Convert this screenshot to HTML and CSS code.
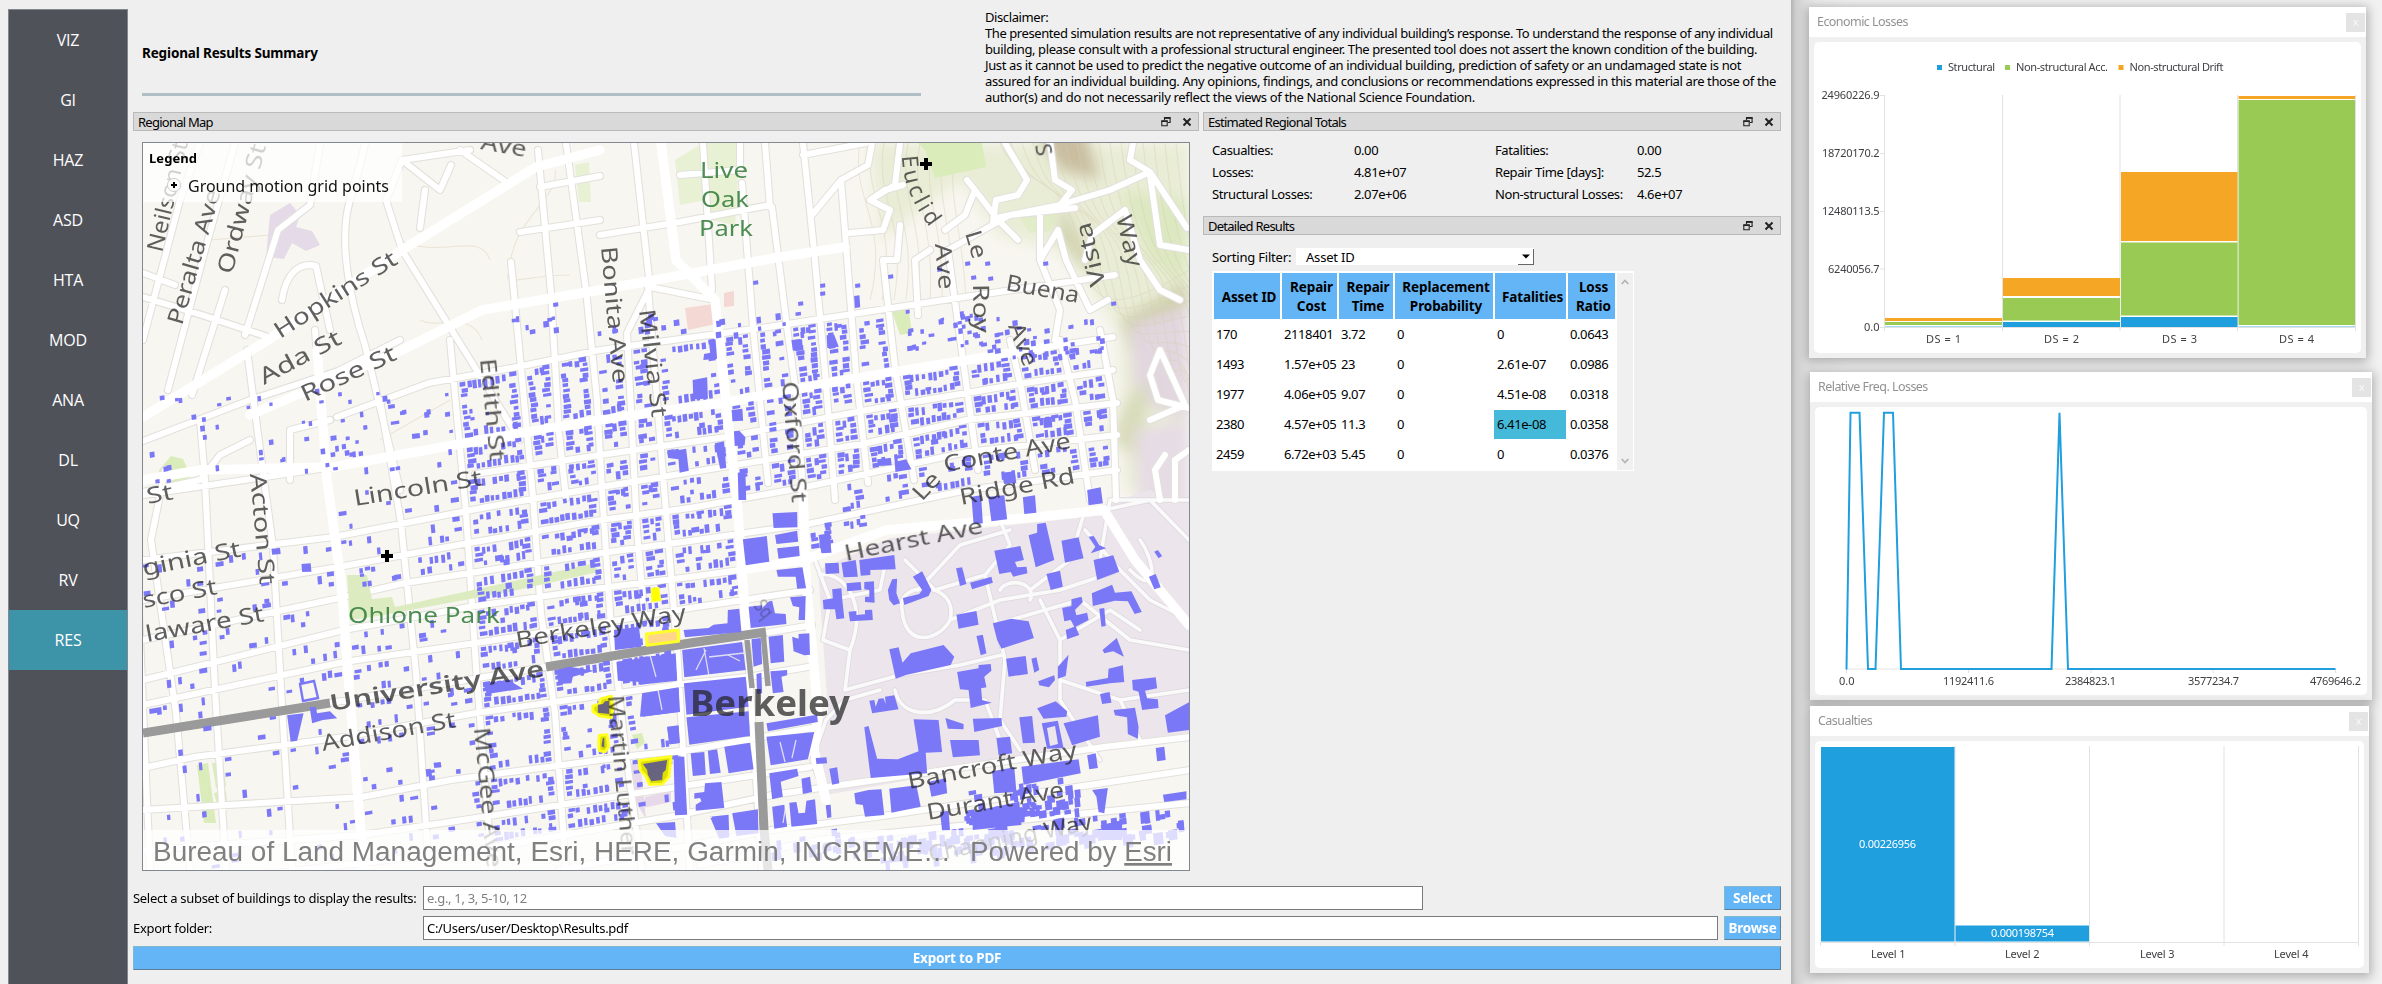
FILE: index.html
```html
<!DOCTYPE html>
<html lang="en">
<head>
<meta charset="utf-8">
<title>Regional Results Summary</title>
<link rel="stylesheet" href="styles.css">
</head>
<body>
<svg class="defs" width="0" height="0">
  <symbol id="float" viewBox="0 0 10 10"><path d="M3.5 3V.9h5.6v4.6H7M.8 4.2h5.4v4.6H.8z" fill="none" stroke="#222" stroke-width="1.1"/><path d="M3 .8h6.5M.3 4.2h6.4" stroke="#222" stroke-width="1.7"/></symbol>
  <symbol id="close" viewBox="0 0 10 10"><path d="M1.5 1.5l7 7M8.5 1.5l-7 7" stroke="#222" stroke-width="2"/></symbol>
</svg>
<div class="app">
  <nav class="side">
    <a>VIZ</a><a>GI</a><a>HAZ</a><a>ASD</a><a>HTA</a><a>MOD</a><a>ANA</a><a>DL</a><a>UQ</a><a>RV</a><a class="active">RES</a>
  </nav>
  <main class="main">
    <header class="head">
      <div class="headline"><h1>Regional Results Summary</h1></div>
      <div class="disclaimer">
        <div>Disclaimer:</div>
        <div class="l1">The presented simulation results are not representative of any individual building’s response. To understand the response of any individual</div>
        <div class="l2">building, please consult with a professional structural engineer. The presented tool does not assert the known condition of the building.</div>
        <div class="l3">Just as it cannot be used to predict the negative outcome of an individual building, prediction of safety or an undamaged state is not</div>
        <div class="l4">assured for an individual building. Any opinions, findings, and conclusions or recommendations expressed in this material are those of the</div>
        <div class="l5">author(s) and do not necessarily reflect the views of the National Science Foundation.</div>
      </div>
    </header>
    <div class="docks">
      <section class="dock-map">
        <div class="dock-title"><span>Regional Map</span><svg><use href="#float"/></svg><svg><use href="#close"/></svg></div>
        <div class="map"><svg id="map" viewBox="143 143 1046 727" width="1046" height="727"></svg></div>
      </section>
      <section class="dock-results">
        <div class="dock-title"><span>Estimated Regional Totals</span><svg><use href="#float"/></svg><svg><use href="#close"/></svg></div>
        <div class="totals">
          <span>Casualties:</span><span>0.00</span><span>Fatalities:</span><span>0.00</span>
          <span>Losses:</span><span>4.81e+07</span><span>Repair Time [days]:</span><span>52.5</span>
          <span>Structural Losses:</span><span>2.07e+06</span><span>Non-structural Losses:</span><span>4.6e+07</span>
        </div>
        <div class="dock-title"><span>Detailed Results</span><svg><use href="#float"/></svg><svg><use href="#close"/></svg></div>
        <div class="filter"><label>Sorting Filter:</label><div class="select"><span>Asset ID</span><i><svg width="8" height="5"><path d="M0 .5h8L4 4.5z"/></svg></i></div></div>
        <div class="table">
          <div class="grid">
            <b>Asset ID</b><b>Repair<br>Cost</b><b>Repair<br>Time</b><b>Replacement<br>Probability</b><b>Fatalities</b><b>Loss<br>Ratio</b>
            <span>170</span><span>2118401</span><span>3.72</span><span>0</span><span>0</span><span>0.0643</span>
            <span>1493</span><span>1.57e+05</span><span>23</span><span>0</span><span>2.61e-07</span><span>0.0986</span>
            <span>1977</span><span>4.06e+05</span><span>9.07</span><span>0</span><span>4.51e-08</span><span>0.0318</span>
            <span>2380</span><span>4.57e+05</span><span>11.3</span><span>0</span><span class="sel">6.41e-08</span><span>0.0358</span>
            <span>2459</span><span>6.72e+03</span><span>5.45</span><span>0</span><span>0</span><span>0.0376</span>
          </div>
          <div class="scroll"><svg width="8" height="6"><path d="M.7 5L4 1.5 7.3 5"/></svg><svg width="8" height="6"><path d="M.7 1L4 4.5 7.3 1"/></svg></div>
        </div>
      </section>
    </div>
    <div class="form">
      <label>Select a subset of buildings to display the results:</label><div class="input short hint">e.g., 1, 3, 5-10, 12</div><button>Select</button>
    </div>
    <div class="form">
      <label>Export folder:</label><div class="input">C:/Users/user/Desktop\Results.pdf</div><button>Browse</button>
    </div>
    <button class="export">Export to PDF</button>
  </main>
  <aside class="charts">
    <section class="win w1">
      <div class="win-title"><span>Economic Losses</span><i>x</i></div>
      <div class="card">
        <svg viewBox="1814 42 547 311" width="547" height="311">
          <g class="rule"><path d="M1884.5 95V331M2002.5 95V331M2120 95V331M2237.5 95V331M2355.5 95V331M1880 327.5H2355M1880 95.5h5M1880 153.5h5M1880 211.5h5M1880 269h5"/></g>
          <g fill="#f6a625"><path d="M1885 318h117v3h-117zM2003 278h117v18h-117zM2121 172h116.500v69H2121zM2238.500 96H2355v3h-116.500z"/></g>
          <g fill="#99ca53"><path d="M1885 322h117v3h-117zM2003 298h117v22.500h-117zM2121 242.500h116.500v73H2121zM2238.500 100H2355v225h-116.500z"/></g>
          <g fill="#209fdf"><path d="M2003 322h117v5h-117zM2121 317h116.500v10H2121z"/><path opacity=".4" d="M1885 326h117v1h-117zM2238.500 326H2355v1h-116.500z"/></g>
          <path fill="#209fdf" d="M1937 65h5v5h-5z"/><path fill="#99ca53" d="M2005 65h5v5h-5z"/><path fill="#f6a625" d="M2118.500 65h5v5h-5z"/>
          <text x="1948" y="71" textLength="47">Structural</text><text x="2016" y="71" textLength="92">Non-structural Acc.</text><text x="2129.500" y="71" textLength="94">Non-structural Drift</text>
          <g class="num"><text x="1821.500" y="99" textLength="58">24960226.9</text><text x="1822" y="157" textLength="57.500">18720170.2</text><text x="1822" y="215" textLength="57.500">12480113.5</text><text x="1828" y="273" textLength="51.500">6240056.7</text><text x="1864" y="331" textLength="15.500">0.0</text></g>
          <g><text x="1926" y="343" textLength="35">DS = 1</text><text x="2044" y="343" textLength="35">DS = 2</text><text x="2162" y="343" textLength="35">DS = 3</text><text x="2279" y="343" textLength="35">DS = 4</text></g>
        </svg>
      </div>
    </section>
    <section class="win w2">
      <div class="win-title"><span>Relative Freq. Losses</span><i>x</i></div>
      <div class="card">
        <svg viewBox="1815 407 552 288" width="552" height="288">
          <path class="rule" d="M1846.500 669V673M1968.500 669V673M2091 669V673M2213 669V673M2335.500 669V673M1846 669H2335"/>
          <path fill="none" stroke="#209fdf" stroke-width="2" d="M1846.500 669.500L1850.500 412.700H1859.500L1868 669H1875.500L1884 412.700H1893L1901 669H2051.500L2059.500 412.700 2068 669H2335.500"/>
          <text x="1839" y="685" textLength="15.500">0.0</text><text x="1943" y="685" textLength="51">1192411.6</text><text x="2065" y="685" textLength="51">2384823.1</text><text x="2188" y="685" textLength="51">3577234.7</text><text x="2310" y="685" textLength="51">4769646.2</text>
        </svg>
      </div>
    </section>
    <section class="win w3">
      <div class="win-title"><span>Casualties</span><i>x</i></div>
      <div class="card">
        <svg viewBox="1815 741 549 227" width="549" height="227">
          <path class="rule" d="M1820.500 942V946M1955 746V946M2089.500 746V946M2224 746V946M2358.500 746V946M1820 942.500H2358"/>
          <path fill="#209fdf" d="M1821 747h133.500v194.500H1821zM1955.500 925.500H2089v16h-133.500z"/>
          <g class="light"><text x="1859" y="848" textLength="57">0.00226956</text><text x="1991" y="937" textLength="63">0.000198754</text></g>
          <text x="1871" y="958" textLength="34.500">Level 1</text><text x="2005" y="958" textLength="34.500">Level 2</text><text x="2140" y="958" textLength="34.500">Level 3</text><text x="2274" y="958" textLength="34.500">Level 4</text>
        </svg>
      </div>
    </section>
  </aside>
</div>
<script src="map.js"></script>
</body>
</html>
```
FILE: styles.css
```css
* { box-sizing: border-box; }
body { margin: 0; width: 2382px; height: 984px; overflow: hidden; background: #efefef; color: #000; font: 13px/16px "Noto Sans", sans-serif; letter-spacing: -0.4px; }
.defs { position: absolute; }
.app { display: flex; height: 984px; }
.side { width: 120px; height: 980px; margin: 9px 0 0 8px; background: #50525a; border: 1px solid #828790; flex: none; }
.side a { display: flex; height: 60px; align-items: center; justify-content: center; color: #fff; font: 16px/20px "Open Sans", sans-serif; letter-spacing: -0.2px; }
.side .active { background: #3d93a8; }
.main { width: 1663px; flex: none; padding: 0 10px 0 5px; display: flex; flex-direction: column; }
.head { display: flex; height: 112px; flex: none; }
.headline { width: 779px; margin: 0 64px 0 9px; height: 96px; border-bottom: 3px solid #b0bec5; padding-top: 45px; }
h1 { margin: 0; font-size: 13.5px; line-height: 16px; letter-spacing: -0.15px; }
.disclaimer { padding-top: 9px; white-space: nowrap; }
.l1 { letter-spacing: -0.42px; }
.l2 { letter-spacing: -0.39px; }
.l3 { letter-spacing: -0.37px; }
.l4 { letter-spacing: -0.38px; }
.l5 { letter-spacing: -0.33px; }
.docks { display: flex; gap: 4px; height: 774px; flex: none; }
.dock-map { width: 1066px; }
.dock-results { width: 578px; }
.dock-title { display: flex; align-items: center; gap: 11px; height: 19px; background: #d9d9d9; border: 1px solid #bababa; padding: 0 6px 0 4px; letter-spacing: -0.75px; }
.dock-title span { flex: 1; }
.dock-title svg { width: 10px; height: 10px; }
.map { width: 1048px; height: 729px; margin: 11px 0 0 9px; border: 1px solid #828790; overflow: hidden; }
.map svg { display: block; }
.totals { display: grid; grid-template-columns: 142px 141px 142px 1fr; grid-auto-rows: 22px; height: 85px; padding: 8px 0 0 9px; line-height: 22px; }
.filter { display: flex; align-items: center; padding: 0 0 0 9px; height: 17px; margin-top: 13px; letter-spacing: -0.2px; }
.filter label { width: 84px; }
.select { width: 238px; height: 17px; background: #fff; display: flex; justify-content: space-between; align-items: center; padding-left: 10px; }
.select i { width: 16px; height: 16px; display: flex; align-items: center; justify-content: center; border: solid #666; border-width: 0 1px 1px 0; }
.table { display: flex; justify-content: space-between; width: 422px; height: 200px; margin: 6px 0 0 9px; padding: 2px 1px 1px 2px; background: #fff; }
.grid { display: grid; grid-template-columns: 66px 55px 54px 98px 71px 47px; grid-template-rows: 46px; grid-auto-rows: 30px; column-gap: 2px; }
.grid b { background: #64b5f6; display: flex; align-items: center; justify-content: center; text-align: center; font-size: 13.5px; line-height: 19px; padding: 2px 0 0 4px; letter-spacing: -0.1px; }
.grid span { padding-left: 2px; line-height: 31px; }
.grid .sel { background: #45b9d9; margin: 1px 0 0 -1px; padding-left: 3px; line-height: 29px; }
.scroll { width: 16px; background: #f0f0f0; display: flex; flex-direction: column; justify-content: space-between; align-items: center; padding: 6px 0; }
.scroll path { fill: none; stroke: #b4b4b4; stroke-width: 1.8; }
.form { display: flex; height: 24px; margin-bottom: 6px; flex: none; align-items: center; letter-spacing: -0.31px; }
.form label { width: 290px; }
.input { width: 1295px; height: 24px; border: 1px solid #7a7a7a; background: #fff; padding: 3px; margin-right: 6px; }
.short { width: 1000px; margin-right: 301px; }
.hint { color: #808080; }
button { width: 57px; height: 24px; padding: 0; background: #64b5f6; border: 1px solid #7fb8cf; border-right-color: #5c7f99; border-bottom-color: #5c7f99; border-radius: 1px; color: #fff; font: bold 13.5px/16px "Noto Sans", sans-serif; letter-spacing: -0.2px; }
.export { width: 1648px; flex: none; }
.charts { flex: 1; background: linear-gradient(90deg, #b4b4b4, #cfcfcf 5px, #e2e2e2 16px, #ececec 26px, #f1f1f1 60px); padding: 7px 0 0 18px; }
.win { background: #f0f0f0; box-shadow: 0 2px 10px 2px rgba(0,0,0,.28); }
.w1 { width: 557px; height: 351px; margin-bottom: 14px; }
.w2 { width: 562px; height: 328px; margin: 0 0 6px 1px; }
.w3 { width: 559px; height: 267px; margin-left: 1px; }
.win-title { height: 30px; background: #fff; display: flex; justify-content: space-between; align-items: center; padding: 0 1px 0 8px; color: #929292; font-size: 12.5px; letter-spacing: -0.55px; }
.win-title i { width: 19px; height: 19px; background: #e4e4e4; color: #f8f8f8; font-style: normal; line-height: 17px; text-align: center; font-size: 11px; }
.card { margin: 5px 5px 0; background: #fff; border-radius: 5px; overflow: hidden; }
.card svg { display: block; }
.card text { font-size: 11px; letter-spacing: 0; fill: #404044; }
.card .light text { fill: #fff; }
.rule { fill: none; stroke: #e2e2e2; stroke-width: 1; }
#map text { font-family: "Noto Sans", sans-serif; font-size: 22.5px; letter-spacing: 0; fill: #222; opacity: .72; }
#map .park { fill: #2f7a35; opacity: .85; }
#map .strong { font-weight: 600; }
#map .city { font-weight: 700; font-size: 36px; }
#map .faint { opacity: .35; font-size: 19px; }
#map .legend { font: bold 13px "Noto Sans", sans-serif; fill: #000; opacity: 1; }
#map .item { font: 16px "Noto Sans", sans-serif; fill: #111; opacity: 1; }
#map .credit { font: 27px "Liberation Sans", Arial, sans-serif; fill: #808080; opacity: 1; }
```
FILE: map.js
```js
(function () {
  var svg = document.getElementById('map');
  var out = [];
  var seed = 11;
  function rnd() { seed = (seed * 16807) % 2147483647; return seed / 2147483647; }

  // Streets running north-south: [x, y] vertices, top to bottom.
  var ns = {
    w0: [[128, 400], [135, 520], [150, 870]],
    w1: [[165, 470], [151, 540], [176, 713], [190, 870]],
    w2: [[200, 420], [205, 480], [215, 690], [226, 870]],
    w3: [[247, 350], [264, 480], [273, 547], [284, 740], [292, 870]],
    sac: [[315, 330], [327, 480], [341, 580], [351, 713], [364, 870]],
    w5: [[380, 400], [401, 523], [416, 673], [429, 870]],
    cal: [[450, 340], [466, 513], [476, 667], [492, 870]],
    mcg: [[511, 262], [524, 400], [533, 497], [541, 613], [555, 713], [566, 870]],
    edi: [[538, 150], [551, 293], [559, 433], [566, 498]],
    gra: [[566, 143], [586, 290], [597, 400], [602, 490], [610, 613], [625, 747], [642, 870]],
    bon: [[634, 143], [650, 287], [627, 333], [631, 410], [637, 530], [644, 613]],
    mil: [[648, 287], [657, 400], [665, 500], [677, 647], [690, 870]],
    sha: [[661, 143], [676, 260], [715, 300], [726, 400], [737, 500], [747, 640], [762, 870]],
    wal: [[742, 183], [753, 327], [768, 483]],
    oxf: [[772, 207], [787, 327], [797, 400], [803, 493], [806, 580], [818, 713]],
    spr: [[803, 143], [814, 250], [826, 383], [835, 500]],
    arc: [[841, 180], [856, 373], [868, 483]],
    euc: [[883, 260], [895, 367], [914, 480]],
    roy: [[948, 250], [964, 367], [978, 470]],
    lal: [[1010, 340], [1021, 387], [1035, 470]],
    lro: [[1060, 340], [1075, 400], [1090, 500]],
    cra: [[1100, 330], [1113, 400], [1116, 500]]
  };
  // Streets running west-east.
  var ew = {
    a: [[337, 417], [429, 383], [517, 367], [600, 350], [768, 327], [944, 300], [1115, 275]],
    ced: [[143, 495], [333, 467], [498, 437], [600, 420], [722, 403], [845, 380], [1048, 347], [1113, 337]],
    lin: [[475, 474], [600, 455], [726, 437], [867, 410], [1025, 383], [1113, 370]],
    vir: [[143, 560], [334, 537], [487, 507], [601, 487], [784, 457], [867, 443], [967, 420], [1117, 403]],
    fra: [[143, 600], [344, 566], [469, 543], [601, 520], [690, 508], [801, 488], [967, 452], [1117, 435]],
    del: [[143, 640], [344, 597], [405, 583], [601, 553], [690, 541], [808, 524], [967, 490], [1117, 470]],
    hea: [[143, 680], [344, 630], [469, 607], [601, 588], [690, 577], [740, 570], [804, 560], [886, 530], [1036, 517], [1104, 510]],
    ber: [[143, 705], [344, 662], [476, 643], [601, 623], [690, 608], [810, 590]],
    uni: [[143, 733], [330, 703], [484, 677], [690, 643], [765, 633], [812, 625]],
    add: [[143, 768], [194, 757], [344, 737], [476, 713], [690, 683], [747, 677], [808, 667]],
    all: [[143, 810], [362, 797], [451, 780], [630, 756], [690, 750], [818, 727]],
    kit: [[143, 850], [362, 835], [476, 818], [690, 785], [810, 767]],
    ban: [[143, 888], [476, 850], [680, 815], [772, 795], [897, 777], [1104, 747], [1190, 737]],
    dur: [[560, 870], [772, 830], [876, 817], [1190, 770]],
    cha: [[700, 865], [818, 840], [1190, 803]]
  };
  function at(line, v, k) {
    var i = 0, o = 1 - k;
    while (i < line.length - 2 && line[i + 1][k] < v) i++;
    var p = line[i], q = line[i + 1];
    return p[o] + (q[o] - p[o]) * (v - p[k]) / (q[k] - p[k]);
  }
  function cross(n, e) {
    var y = 550, x = 0;
    for (var i = 0; i < 8; i++) { x = at(ns[n], y, 1); y = at(ew[e], x, 0); }
    return [x, y];
  }
  function mix(a, b, t) { return [a[0] + (b[0] - a[0]) * t, a[1] + (b[1] - a[1]) * t]; }

  var houses = [];
  function house(p, w, h) {
    houses.push('<path d="M' + p[0].toFixed(1) + ' ' + p[1].toFixed(1) + 'l' + w.toFixed(1) + ' ' + (-w * 0.16).toFixed(1) +
      'l' + (h * 0.09).toFixed(1) + ' ' + h.toFixed(1) + 'l' + (-w).toFixed(1) + ' ' + (w * 0.16).toFixed(1) + 'z"/>');
  }
  function block(n1, n2, e1, e2, dens) {
    var a = cross(n1, e1), b = cross(n2, e1), c = cross(n2, e2), d = cross(n1, e2);
    var H = Math.hypot(d[0] - a[0], d[1] - a[1]), W = Math.hypot(b[0] - a[0], b[1] - a[1]), s, p, w;
    if (H < 12 || W < 12) return;
    for (s = 5; s < H - 8; s += 4.6 + rnd() * 1.8) {
      if (rnd() < dens) { p = mix(a, d, s / H); house([p[0] + 5 + rnd() * 2, p[1] - 1], 4.5 + rnd() * 4, 3 + rnd() * 2); }
      if (rnd() < dens) { p = mix(b, c, s / H); w = 4.5 + rnd() * 4; house([p[0] - 5 - w - rnd() * 2, p[1] + 1], w, 3 + rnd() * 2); }
      if (W > 42 && rnd() < dens * 0.35) { p = mix(mix(a, d, s / H), mix(b, c, s / H), 0.3 + rnd() * 0.35); house(p, 3 + rnd() * 5, 3 + rnd() * 3); }
    }
    for (s = 14; s < W - 14; s += 4.8 + rnd() * 2) {
      if (rnd() < dens) { p = mix(a, b, s / W); house([p[0], p[1] + 5 + rnd() * 2], 3 + rnd() * 1.6, 4.5 + rnd() * 4); }
      if (rnd() < dens) { p = mix(d, c, s / W); w = 4.5 + rnd() * 4; house([p[0], p[1] - 5 - w - rnd()], 3 + rnd() * 1.6, w); }
    }
  }
  function fill(cols, rows, dens) {
    for (var i = 0; i < cols.length - 1; i++)
      for (var j = 0; j < rows.length - 1; j++) block(cols[i], cols[i + 1], rows[j], rows[j + 1], dens);
  }
  fill(['w0', 'w2', 'w3', 'sac'], ['vir', 'fra', 'del', 'hea', 'ber', 'uni'], 0.18);
  fill(['w0', 'w2', 'w3', 'sac'], ['uni', 'add', 'all', 'kit', 'ban'], 0.13);
  fill(['sac', 'w5', 'cal'], ['a', 'ced', 'vir'], 0.12);
  fill(['sac', 'w5', 'cal'], ['vir', 'fra', 'del'], 0.33);
  fill(['sac', 'w5', 'cal'], ['hea', 'ber', 'uni', 'add', 'all', 'kit', 'ban'], 0.24);
  fill(['cal', 'mcg', 'edi', 'gra'], ['a', 'ced', 'lin', 'vir'], 0.84);
  fill(['gra', 'bon', 'mil', 'sha'], ['a', 'ced', 'lin', 'vir'], 0.68);
  fill(['sha', 'wal', 'oxf'], ['a', 'ced', 'vir', 'fra'], 0.62);
  fill(['cal', 'mcg', 'gra', 'bon', 'mil', 'sha'], ['vir', 'fra', 'del', 'hea'], 0.7);
  fill(['cal', 'mcg', 'gra', 'mil'], ['hea', 'ber', 'uni', 'add'], 0.9);
  fill(['cal', 'mcg', 'gra'], ['add', 'all', 'kit', 'ban'], 0.74);
  fill(['gra', 'mil'], ['add', 'all', 'kit', 'ban'], 0.3);
  fill(['mil', 'sha'], ['hea', 'ber'], 0.7);
  fill(['oxf', 'spr', 'arc', 'euc', 'roy', 'lal', 'lro'], ['ced', 'lin', 'vir', 'fra'], 0.92);
  fill(['oxf', 'spr', 'arc'], ['a', 'ced'], 0.92);
  fill(['arc', 'euc'], ['a', 'ced'], 0.55);
  fill(['spr', 'arc', 'euc', 'roy', 'lal', 'lro', 'cra'], ['fra', 'del'], 0.6);
  fill(['lro', 'cra'], ['ced', 'lin', 'vir', 'fra'], 0.55);
  fill(['oxf', 'spr', 'arc'], ['del', 'hea'], 0.5);
  var k, x, y;
  for (k = 0; k < 60; k++) { x = 147 + rnd() * 325; house([x, 395 + rnd() * 90 - (x - 147) * 0.05], 3 + rnd() * 2, 3 + rnd() * 3); }
  for (k = 0; k < 70; k++) { x = 905 + rnd() * 200; y = 318 + rnd() * 40 - (x > 1010 ? 0 : 8); house([x, y], 3 + rnd() * 3, 3 + rnd() * 3); }
  for (k = 0; k < 34; k++) { x = 510 + rnd() * 370; house([x, 312 + rnd() * 22], 3 + rnd() * 3, 3 + rnd() * 4); }
  [[553, 303], [965, 262], [985, 262], [971, 276], [988, 277], [1043, 262], [937, 268], [888, 275], [753, 281], [820, 284], [820, 292], [855, 284], [798, 302], [1111, 302]].forEach(function (p) { house(p, 5, 4); });
  for (k = 0; k < 90; k++) { x = 880 + rnd() * 300; house([x, 838 + rnd() * 26 - (x - 880) * 0.11], 4 + rnd() * 6, 4 + rnd() * 8); }
  for (k = 0; k < 50; k++) { x = 770 + rnd() * 230; house([x, 828 + rnd() * 30], 4 + rnd() * 4, 4 + rnd() * 7); }
  for (k = 0; k < 55; k++) { x = 960 + rnd() * 115; house([x, 790 + rnd() * 34 - (x - 960) * 0.12], 4 + rnd() * 4, 4 + rnd() * 6); }

  function line(pts) { return 'M' + pts.map(function (p) { return p.join(' '); }).join('L'); }
  var roads = '';
  Object.keys(ns).forEach(function (n) { roads += line(ns[n]); });
  Object.keys(ew).forEach(function (e) { roads += line(ew[e]); });
  roads += 'M143 340L180 200 200 143M168 390L205 250 235 143M192 395L225 290M245 335L278 230 310 205 320 143M143 297L205 316 268 337M143 273L175 285M282 300C286 272 300 262 316 266L330 330M402 250L520 440M350 200C338 240 350 300 365 345L400 490M365 143C360 170 352 190 350 200M402 250L386 200 402 160 470 150M402 160L440 190 451 165M506 182L460 150M425 190L420 228M540 187L600 176M520 232L600 220M143 441L250 400 402 350 M340 370L400 340M290 480L290 430 330 420M143 492L200 480 220 455 250 440M600 235L680 222 770 205M650 287L715 300M680 175L740 170 740 143M703 143L712 290M765 143L770 207M803 155L866 143M841 180L868 165 872 143M870 200L895 185 900 143M812 215L841 180M850 233L883 230 890 210 870 200 885 190 903 185M883 260L897 260 900 225M918 315L915 260 930 250M948 250L1010 215 1075 208M945 230L965 215 975 190 967 180M975 190L998 220 1018 240M1005 143L1027 180 1018 195 996 200 993 222M1050 143L1055 180 1072 190 1060 205 996 218M1060 205L1110 190 1150 172 1130 160 1133 143M1150 172L1187 228M1150 175L1160 245 1189 250M1040 215L1040 260 1060 310 1055 340M1040 260L1058 230 1066 260 1090 310 1108 300M1085 260L1092 235 1125 210 1140 260 1160 290 1180 300M1150 420L1185 405 1160 350 1150 375 1158 400 1189 408M1160 500L1155 470 1165 455M1175 500L1175 460 1189 450';
  var campus = 'M815 560L830 600 880 590 886 560M830 600L823 640 850 650 845 690 900 675 960 665 1002 655M905 560L935 590 985 575 1010 545 1000 520M985 575L1005 660 1000 720 1020 750M902 610C895 580 960 580 950 620C940 640 905 650 902 610M950 620L1000 600 1060 590 1120 570M1040 600L1060 640 1110 610 1140 630M1085 530L1120 570 1150 600 1189 620M1060 680L1120 700 1189 690M895 690C900 715 930 720 955 700L985 700 1000 740M1104 510L1150 500 1189 540M1130 570C1160 600 1155 560 1140 540M1000 590A16 12 0 1 1 1030 600M1060 640L1060 700 1100 760M1120 700L1140 740M1085 510L1070 560 1030 590M826 720L845 700 880 690M850 650C870 600 840 570 820 575M826 720L812 760 826 800M918 590L960 545 1010 530M1100 560L1110 500 1189 500M1010 620L1080 600 1130 640 1189 650';
  out.push('<defs><filter id="soft"><feGaussianBlur stdDeviation="7"/></filter><filter id="haze"><feGaussianBlur stdDeviation=".6"/></filter></defs>');
  out.push('<rect x="143" y="143" width="1046" height="727" fill="#f8f6f0"/>');
  // Hills in the north-east.
  out.push('<g filter="url(#soft)"><path d="M870 143H1189V500L1125 490 1120 330 1060 250 1000 235 960 180 880 240z" fill="#e9edd6"/><path d="M1035 130L1085 130 1100 180 1060 170z" fill="#c9bea0"/><path d="M1060 200L1090 260 1085 270 1060 240zM1120 320L1189 280V320L1130 350z" fill="#cfd0ac"/><path d="M1120 190L1189 200V290L1150 260z" fill="#dbe8c0"/><path d="M1130 325L1189 305V420L1135 400z" fill="#e2d6df"/><path d="M1125 400L1150 380 1140 460 1110 440z" fill="#d8dcba"/><path d="M1135 430L1189 420V560L1140 530z" fill="#e6dce5"/></g>');
  out.push('<g fill="none" stroke="#d8cdb2" stroke-width="1.1" opacity=".4">');
  for (k = 0; k < 17; k++) { var q = k * 11; out.push('<path d="M' + (1000 + q) + ' 143C' + (1020 + q) + ' ' + (190 + q) + ' ' + (1060 + q) + ' ' + (170 + q / 2) + ' ' + (1075 + q) + ' ' + (230 + q) + 'S' + (1090 + q) + ' 330 1189 ' + (270 + q * 1.4) + '"/>'); }
  for (k = 0; k < 9; k++) out.push('<path d="M' + (860 + k * 12) + ' 143C' + (850 + k * 12) + ' 200 ' + (890 + k * 9) + ' 220 ' + (870 + k * 12) + ' 300"/>');
  out.push('<path d="M555 170C560 200 510 220 510 270C500 290 520 275 570 275M400 240C440 260 480 230 490 260M210 240L270 235M420 320C440 330 470 310 482 340M380 440L450 400"/></g>');
  out.push('<g fill="#ece6ec"><path d="M818 570L890 538 1104 515 1189 500V733L1104 745 826 795 812 760 828 712z"/><path d="M1104 505L1150 490 1189 510V640L1130 560z"/></g>');
  out.push('<path fill="#e4dae8" d="M270 215l20-12 10 12-4 12 16 4 8 14-14 6-14-8-8 16-18-2z"/><path fill="#f4d8d4" d="M685 308l28-4 3 20-28 6zM724 293l10-2v15l-10 1z"/><path fill="#e7d9ea" d="M630 765l10-6 6 60-12-20zM645 797l26-6v11l-28 6z"/>');
  out.push('<g fill="#d9ecb9"><path d="M918 143H982L986 167 935 178 925 150z"/><path d="M675 160L703 143 740 143 735 225 712 220 705 200 680 205z" opacity=".5"/><path d="M159 470l12-14 12 3 8 18-20 6-12-4zM197 765l11-2 8 60-12 0zM212 763l11-1 3 24-10 2zM214 793l12-2 1 12-10 1zM890 305l18 0 4 28-12 2zM632 735l10-2 3 10-8 6z"/><path d="M1018 215l40-4-8 20-20 2zM575 165l14-3 2 40-12 0z" opacity=".5"/></g>');
  out.push('<g fill="none" stroke-linejoin="round" stroke-linecap="round" filter="url(#haze)"><path d="' + campus + '" stroke="#e0dbdf" stroke-width="5.500"/><path d="' + roads + '" stroke="#e3e1dc" stroke-width="8.200"/><path d="' + campus + '" stroke="#fbfafb" stroke-width="3.600"/><path d="' + roads + '" stroke="#fff" stroke-width="6"/>');
  out.push('<path stroke="#fff" stroke-width="9.500" d="M143 417L268 340 402 250 536 167 600 150M143 480L200 470 333 467 498 437 600 420 722 403 845 380 1048 347M661 143L676 260 715 300 726 400 737 500 747 640M317 350L327 480 341 580 351 713 364 870M250 415L402 350 482 310 600 290 780 257 845 247M740 570L804 560 886 530 1036 517 1104 510 1135 560 1189 625M803 493L806 580 818 713 814 750 826 800"/></g>');
  out.push('<path fill="#dcecc0" d="M347 575h20l5 24 20-2 3 10 110-24 90-20 3 9-90 20-130 24-28 4z"/>');
  out.push('<g fill="none" stroke="#9a9a9a" stroke-width="9"><path d="M143 733L330 703"/><path d="M546 667L690 643 766 632"/><path stroke-width="5.500" d="M747 640L752 688M763 632L768 686"/><path d="M759 722L764 830 768 870"/></g>');

  // Large footprints, in tile units (2.8 x 3 per pixel).
  var big = '<g transform="translate(640 480) scale(.35714 .33333)">' + [
    '371,100 440,96 441,142 374,144', '288,178 355,168 362,245 296,256', '378,165 440,152 443,185 382,192', '384,205 445,198 447,228 388,236', '382,270 455,262 465,325 440,326 436,290 386,290', '518,250 556,248 558,280 520,282', '564,248 604,240 610,290 570,292', '614,240 712,225 716,268 645,270 645,285 618,287', '500,165 532,160 536,218 508,220',
    '512,360 540,355 538,328 564,325 566,355 572,415 550,418 546,388 514,388', '578,310 618,306 620,330 580,334', '628,306 655,304 657,368 630,366 630,350 642,350 642,330 628,328', '584,395 606,393 606,405 630,403 630,390 650,389 652,420 588,424', '694,330 706,298 720,296 718,340 728,370 710,376 698,360', '764,290 790,274 816,330 808,348 740,375 736,354 782,342 790,330', '885,265 902,262 914,312 896,318', '924,308 984,290 988,308 930,328',
    '992,212 1065,198 1075,240 1050,246 1056,262 1082,260 1085,280 1045,290 1038,276 1006,282', '1088,166 1112,158 1112,132 1136,128 1160,240 1108,262', '1180,182 1228,172 1242,235 1190,248', '1256,170 1270,168 1286,195 1305,205 1262,220 1275,200', '1270,240 1325,226 1342,275 1280,300', '1138,282 1176,272 1184,320 1150,330', '928,50 955,46 960,130 934,132', '1072,52 1106,46 1110,98 1076,102', '1252,30 1290,22 1296,70 1256,76', '975,50 1020,46 1028,118 984,124',
    '886,404 942,393 948,434 892,446', '988,430 1040,416 1088,424 1103,474 1012,506 1000,480', '942,468 960,464 970,520 954,526', '698,508 724,502 735,548 758,520 850,495 880,530 870,555 745,585 716,596', '888,576 948,565 948,555 982,552 984,572 964,590 970,622 955,625 958,660 985,668 926,684 920,630 896,628', '1025,536 1080,528 1086,582 1032,590', '1182,384 1208,378 1208,358 1236,350 1240,366 1218,390 1222,406 1252,398 1256,420 1220,440 1230,465 1196,478 1192,450 1216,440 1206,420 1188,424', '1265,340 1322,314 1330,338 1376,334 1405,396 1385,402 1366,364 1330,362 1268,378', '1286,386 1300,384 1304,438 1292,440', '1295,510 1335,474 1355,530 1325,514 1300,520', '1312,566 1352,556 1356,606 1316,610 1250,620 1248,606 1310,594', '1378,600 1444,592 1448,625 1414,632 1420,655 1450,658 1452,684 1406,690 1396,635 1380,630', '1425,290 1444,282 1458,322 1440,328', '1440,215 1450,210 1462,228 1452,235',
    '1096,536 1110,532 1118,570 1104,578', '1170,560 1200,524 1192,588 1170,596', '1115,604 1160,586 1162,600 1145,622 1118,616', '1288,642 1315,636 1320,668 1294,672', '1112,685 1164,664 1196,694 1194,710 1130,716', '1326,690 1386,683 1396,740 1394,776 1366,762 1364,712 1330,706', '1470,706 1538,666 1538,750 1478,758', '1062,712 1098,708 1106,788 1072,790', '1186,730 1282,706 1288,770 1210,796', '1125,730 1170,722 1186,804 1140,806', '932,716 1012,714 1014,738 936,756', '855,714 906,732 906,748 862,746',
    '628,742 640,738 664,836 722,838 780,814 766,718 836,720 846,816 800,818 804,880 646,894', '642,662 656,660 660,680 668,656 682,655 688,672 686,650 712,646 724,688 650,700', '868,780 948,780 952,826 876,832', '998,774 1036,770 1042,820 1004,826', '492,834 522,832 524,850 494,852', '530,866 552,862 558,910 538,914',
    '123,610 296,590 304,680 130,704', '130,712 304,694 308,768 138,794', '118,510 286,486 296,570 124,592', '0,532 96,522 104,602 0,614', '6,640 108,622 112,696 0,710', '76,742 108,738 112,788 82,790', '94,828 124,830 132,1004 98,1006', '142,820 180,816 184,884 148,888', '190,812 216,808 226,878 196,882', '236,800 308,788 318,868 248,880', '152,940 180,936 182,910 228,906 236,984 156,992 156,974 172,964 168,954 152,956', '354,770 488,756 470,838 366,856', '362,880 440,866 444,888 394,905 400,950 370,958', '452,896 476,890 482,936 456,942', '370,980 404,974 412,1040 376,1046', '418,968 438,966 444,1000 462,998 466,962 490,958 496,1032 424,1040',
    '312,478 338,474 342,552 318,560', '326,582 340,578 342,640 328,642', '365,574 412,570 412,586 396,590 402,636 372,640', '360,470 400,465 404,545 366,550', '426,470 444,476 444,462 474,460 476,524 460,526 430,514', '304,380 342,376 342,384 362,364 370,362 378,400 408,402 410,432 310,444', '420,352 464,348 462,420 444,420 446,382 428,378', '122,450 192,444 206,434 245,430 246,390 278,386 284,456 126,472', '354,730 496,704 498,726 358,754',
    '600,940 640,930 676,928 684,1005 630,1010 624,975 604,972', '698,926 774,916 786,980 704,998', '1068,860 1228,838 1234,880 1074,914', '986,874 1048,862 1054,936 992,940', '928,995 1062,965 1068,1035 932,1050', '840,996 864,992 868,1050 846,1054', '1252,826 1276,820 1282,864 1258,868', '1266,930 1310,924 1300,1000 1284,996 1278,950', '1444,804 1468,800 1472,840 1448,844', '1464,944 1530,934 1530,958 1468,966', '196,1010 248,1004 250,1072 222,1076', '45,1030 98,1026 102,1074 70,1068', '258,1000 330,988 332,1060 270,1068', '1350,1020 1290,1036 1296,1080 1350,1080', '520,976 534,974 536,1012 524,1014', '808,905 856,895 860,940 816,950'
  ].map(function (p) { return '<polygon points="' + p + '"/>'; }).join('') + '</g>';
  big += '<g transform="translate(130 480) scale(.35714 .33333)">' + ['440,706 486,700 468,782 450,785', '988,610 1060,600 1100,626 1000,642', '1355,450 1425,440 1432,500 1358,510', '1362,545 1460,530 1472,608 1366,602', '1480,530 1528,520 1532,598 1474,606', '1504,740 1536,736 1538,790 1510,792', '396,206 420,204 422,222 398,224', '480,252 506,250 508,275 482,276', '503,682 520,680 524,700 560,694 580,715 540,720 510,730', '1435,650 1536,625 1538,695 1436,710', '1194,570 1230,560 1300,572 1240,590 1236,610 1200,612', '850,848 870,846 872,862 852,864', '828,868 842,866 846,888 830,890'].map(function (p) { return '<polygon points="' + p + '"/>'; }).join('') + '</g>';
  big += '<g transform="translate(600 100) scale(.38268 .33333)">' + ['242,840 280,832 282,896 244,898', '284,722 302,718 306,776 270,780 272,762 288,758', '344,930 372,926 374,962 346,964', '350,994 364,992 380,1012 378,1036 352,1038', '176,1056 225,1046 232,1112 208,1118 205,1078 178,1074', '300,1030 324,1024 330,1104 314,1106', '360,1118 380,1114 382,1200 362,1200', '664,588 678,586 680,622 666,624', '770,1086 800,1078 814,1108 772,1116', '724,1078 760,1074 762,1096 726,1098', '1158,954 1180,950 1182,982 1160,984', '592,706 612,704 624,740 594,744', '500,720 528,718 530,750 504,752', '1050,1118 1084,1114 1088,1150 1056,1152'].map(function (p) { return '<polygon points="' + p + '"/>'; }).join('') + '</g>';
  out.push('<g fill="#7b78f8">' + houses.join('') + big + '</g>');
  out.push('<g fill="#ece6ec"><path d="M1047 728l8-2 3 18-8 2z"/></g><path d="M300 684l14-3 4 17-15 3z" fill="#f8f6ef" stroke="#7b78f8" stroke-width="2.400"/>');
  out.push('<g fill="none" stroke="#f7f5ef" stroke-width="1.300" opacity=".8"><path d="M704 648l5 28M709 657l35-4M650 655l6 22M658 690l4 20M690 822l22-5M706 650l-10 20M728 655l12 6M780 742l5 20M796 740l-4 18M786 805l-3 18"/></g>');
  out.push('<g transform="translate(130 480) scale(.35714 .33333)"><g fill="#ffd58c" stroke="#ffff2a" stroke-linejoin="round" stroke-width="9"><path fill="#ff0" stroke-width="4" d="M1460 326l20-4 6 38-24 5z"/><path d="M1446 462l88-12 2 34-88 12z"/></g><g class="picked" stroke="#e0e000" stroke-linejoin="round"><path fill="#e0e000" stroke="#ffff24" stroke-width="8" d="M1296 678l18-6 4-16 30-8 4 40-4 26-34-6-18-14z"/><path fill="#e0e000" stroke="#ffff24" stroke-width="8" d="M1314 766l22-2 4 36-10 16-16-4-2-22z"/><path fill="#e0e000" stroke="#ffff24" stroke-width="8" d="M1425 842l90-12-6 60-18 22-36 2-12-28-14-14z"/></g><g fill="#68647f"><path d="M1310 674l14-2 6-8 12-2v40l-32-4z"/><path d="M1324 774l4 0 0 30-8-6z"/><path d="M1436 852l68-12-4 30-8 8-2 22-30 4-10-20-2-14z"/></g></g>');

  function label(s, x1, y1, x2, y2, cls) {
    var a = Math.atan2(y2 - y1, x2 - x1) * 180 / Math.PI, l = Math.hypot(x2 - x1, y2 - y1);
    out.push('<text class="' + (cls || '') + '" transform="translate(' + x1 + ' ' + y1 + ') rotate(' + a.toFixed(1) + ')" textLength="' + l.toFixed(1) + '" lengthAdjust="spacingAndGlyphs">' + s + '</text>');
  }
  out.push('<g filter="url(#haze)">');
  label('Neilson St', 162, 253, 188, 143); label('Peralta Ave', 182, 326, 221, 192); label('Ordway St', 232, 275, 266, 146);
  label('Hopkins St', 280, 339, 399, 263); label('Ada St', 264, 385, 343, 343); label('Rose St', 305, 402, 398, 359);
  label('Ave', 480, 149, 525, 157); label('Edith St', 480, 359, 490, 461); label('St', 148, 504, 174, 499);
  label('Lincoln St', 355, 506, 483, 485); label('Acton St', 250, 474, 260, 585); label('ginia St', 144, 576, 242, 556);
  label('sco St', 144, 608, 218, 594); label('laware St', 147, 642, 265, 621); label('Ohlone Park', 348, 623, 500, 623, 'park');
  label('Berkeley Way', 517, 648, 687, 620); label('University Ave', 331, 711, 545, 676, 'strong'); label('Addison St', 323, 751, 457, 727);
  label('McGee Ave', 474, 728, 487, 868); label('Martin Luther', 608, 696, 622, 856); label('Berkeley', 690, 716, 850, 716, 'city');
  label('Hearst Ave', 846, 561, 984, 533); label('Bancroft Way', 909, 789, 1078, 757); label('Durant Ave', 928, 820, 1065, 797);
  label('Channing Way', 930, 862, 1093, 829); label('Ridge Rd', 961, 505, 1076, 483); label('Conte Ave', 945, 472, 1072, 448);
  label('Le', 922, 502, 942, 480); label('Oxford St', 782, 382, 792, 503); label('Milvia St', 639, 310, 652, 418);
  label('Bonita Ave', 601, 247, 613, 384); label('Live', 700, 178, 748, 178, 'park'); label('Oak', 701, 207, 749, 207, 'park');
  label('Park', 699, 236, 753, 236, 'park'); label('Ave', 935, 244, 939, 290); label('Le', 965, 233, 973, 260); label('Roy', 973, 284, 974, 333);
  label('Ave', 1008, 326, 1024, 368); label('Buena', 1005, 290, 1078, 303); label('Vista', 1106, 284, 1090, 221); label('Way', 1116, 217, 1128, 268);
  label('S', 1035, 145, 1037, 157); label('Sq', 753, 606, 764, 620, 'faint');
  out.push('<path id="euclid" fill="none" d="M902 156C903 186 915 208 932 230"/><text><textPath href="#euclid" textLength="78">Euclid</textPath></text></g>');
  out.push('<path d="M926 158v12M920 164h12M387 550v12M381 556h12" stroke="#000" stroke-width="4"/>');
  out.push('<rect x="143" y="143" width="259" height="59" fill="#fff" opacity=".72"/><text class="legend" x="149" y="163" textLength="48">Legend</text><circle cx="174" cy="185" r="6.500" fill="#fff" stroke="#ccc"/><path d="M174 182v6M171 185h6" stroke="#000" stroke-width="2"/><text class="item" x="188" y="192" textLength="201">Ground motion grid points</text>');
  out.push('<rect x="143" y="830" width="1046" height="40" fill="#fff" opacity=".75"/><text class="credit" x="153" y="861" textLength="798" lengthAdjust="spacingAndGlyphs">Bureau of Land Management, Esri, HERE, Garmin, INCREME…</text><text class="credit" x="970" y="861" textLength="202" lengthAdjust="spacingAndGlyphs">Powered by <tspan text-decoration="underline">Esri</tspan></text>');
  svg.innerHTML = out.join('');
})();
```
